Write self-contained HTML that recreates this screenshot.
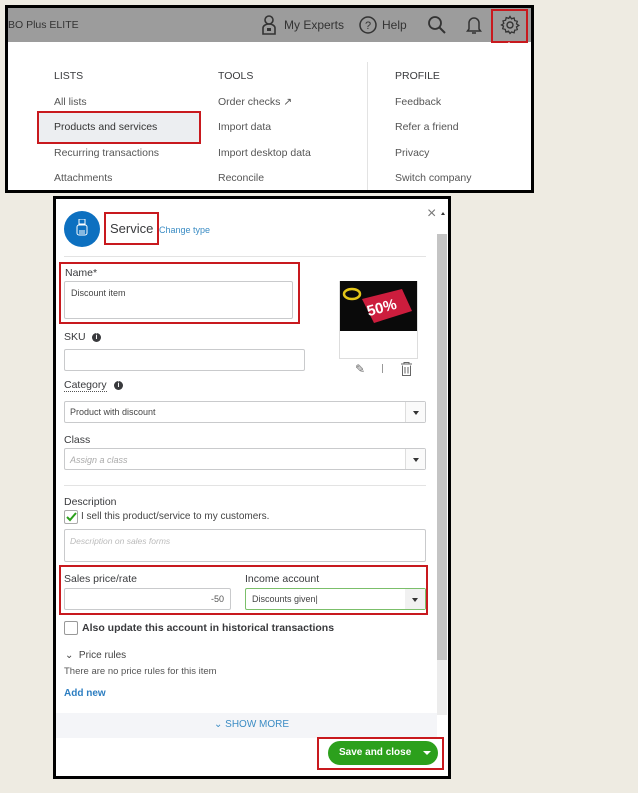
<!DOCTYPE html><html><head><style>
*{box-sizing:border-box;margin:0;padding:0}
body{width:638px;height:793px;background:#eeebe2;font-family:"Liberation Sans",sans-serif;position:relative;overflow:hidden;color:#393a3d}
.a{position:absolute}
.t{font-size:10.5px;color:#555}
.red{position:absolute;border:2px solid #c8191e}
.inp{position:absolute;border:1px solid #c9cacc;background:#fff;border-radius:2px}
.lab{position:absolute;font-size:10.5px;color:#393a3d}
.dd{position:absolute;right:0;top:0;bottom:0;width:20px;border-left:1px solid #ddd;background:#fafafa}
.dd:after{content:"";position:absolute;left:7px;top:45%;border:3px solid transparent;border-top:4px solid #333}
</style></head><body>
<!-- top box -->
<div class="a" style="left:5px;top:5px;width:529px;height:188px;border:3px solid #000;background:#fff"></div>
<div class="a" style="left:8px;top:8px;width:523px;height:34px;background:#9c9c9c"></div>
<div class="a t" style="left:8px;top:19px;color:#333">BO Plus ELITE</div>
<svg class="a" style="left:261px;top:15px" width="16" height="20" viewBox="0 0 16 20"><circle cx="8" cy="5" r="4" fill="none" stroke="#333" stroke-width="1.6"/><path d="M2 19V13a6 4 0 0 1 12 0v6z" fill="none" stroke="#333" stroke-width="1.6"/><rect x="6" y="13" width="4" height="3" fill="#333"/></svg>
<div class="a" style="left:284px;top:18px;font-size:12px;color:#333">My Experts</div>
<svg class="a" style="left:359px;top:16px" width="18" height="18"><circle cx="9" cy="9" r="8" fill="none" stroke="#333" stroke-width="1.5"/><text x="9" y="13" font-size="11" text-anchor="middle" fill="#333" font-family="Liberation Sans">?</text></svg>
<div class="a" style="left:382px;top:18px;font-size:12px;color:#333">Help</div>
<svg class="a" style="left:427px;top:15px" width="20" height="20"><circle cx="8" cy="8" r="6" fill="none" stroke="#333" stroke-width="1.8"/><path d="M12.5 12.5L18 18" stroke="#333" stroke-width="2"/></svg>
<svg class="a" style="left:465px;top:15px" width="18" height="20"><path d="M4 14V8a5 5 0 0 1 10 0v6l1.5 2h-13z" fill="none" stroke="#333" stroke-width="1.5"/><path d="M7 18h4" stroke="#333" stroke-width="1.5"/></svg>
<div class="red" style="left:491px;top:9px;width:37px;height:34px"></div>
<svg class="a" style="left:500px;top:15px" width="20" height="20" viewBox="0 0 20 20"><circle cx="10" cy="10" r="3" fill="none" stroke="#333" stroke-width="1.4"/><path d="M10 1.5l1.5 2.3 2.6-.8.6 2.6 2.6.7-.8 2.6 2.3 1.5-2.3 1.5.8 2.6-2.6.7-.6 2.6-2.6-.8L10 18.5l-1.5-2.3-2.6.8-.6-2.6-2.6-.7.8-2.6L1.5 10l2.3-1.5-.8-2.6 2.6-.7.6-2.6 2.6.8z" fill="none" stroke="#333" stroke-width="1.3"/></svg>
<div class="a" style="left:505px;top:38px;border:4px solid transparent;border-bottom:4px solid #fff"></div>
<div class="a t" style="left:54px;top:70px;color:#393a3d">LISTS</div>
<div class="a t" style="left:54px;top:96px">All lists</div>
<div class="a" style="left:38px;top:112px;width:162px;height:31px;background:#eceef1"></div>
<div class="red" style="left:37px;top:111px;width:164px;height:33px"></div>
<div class="a t" style="left:54px;top:121px;color:#333">Products and services</div>
<div class="a t" style="left:54px;top:147px">Recurring transactions</div>
<div class="a t" style="left:54px;top:172px">Attachments</div>
<div class="a t" style="left:218px;top:70px;color:#393a3d">TOOLS</div>
<div class="a t" style="left:218px;top:96px">Order checks &#x2197;</div>
<div class="a t" style="left:218px;top:121px">Import data</div>
<div class="a t" style="left:218px;top:147px">Import desktop data</div>
<div class="a t" style="left:218px;top:172px">Reconcile</div>
<div class="a" style="left:367px;top:62px;width:1px;height:128px;background:#e3e3e3"></div>
<div class="a t" style="left:395px;top:70px;color:#393a3d">PROFILE</div>
<div class="a t" style="left:395px;top:96px">Feedback</div>
<div class="a t" style="left:395px;top:121px">Refer a friend</div>
<div class="a t" style="left:395px;top:147px">Privacy</div>
<div class="a t" style="left:395px;top:172px">Switch company</div>

<!-- panel -->
<div class="a" style="left:53px;top:196px;width:398px;height:583px;border:3px solid #000;background:#fff"></div>
<div class="a" style="left:437px;top:234px;width:10px;height:426px;background:#c4c4c4"></div>
<div class="a" style="left:437px;top:660px;width:10px;height:55px;background:#ececec"></div>
<div class="a" style="left:427px;top:205px;font-size:16px;color:#777">×</div>
<div class="a" style="left:441px;top:210px;border:2px solid transparent;border-bottom:3px solid #333"></div>
<div class="a" style="left:64px;top:211px;width:36px;height:36px;border-radius:50%;background:#0d70c0"></div>
<svg class="a" style="left:75px;top:219px" width="14" height="20"><rect x="4" y="0" width="6" height="5" fill="none" stroke="#fff"/><rect x="2" y="6" width="10" height="10" rx="2" fill="none" stroke="#fff"/><path d="M4 12h6M4 14h6" stroke="#fff"/></svg>
<div class="red" style="left:104px;top:212px;width:55px;height:33px"></div>
<div class="a" style="left:110px;top:221px;font-size:13px;color:#393a3d">Service</div>
<div class="a" style="left:159px;top:225px;font-size:9px;color:#3b8cc4">Change type</div>
<div class="a" style="left:64px;top:256px;width:362px;height:1px;background:#e3e3e3"></div>
<div class="red" style="left:59px;top:262px;width:241px;height:62px"></div>
<div class="lab" style="left:65px;top:267px">Name*</div>
<div class="inp" style="left:64px;top:281px;width:229px;height:38px"></div>
<div class="a" style="left:71px;top:288px;font-size:9px;color:#444">Discount item</div>
<div class="a" style="left:339px;top:281px;width:79px;height:78px;border:1px solid #ddd;background:#fff"></div>
<svg class="a" style="left:340px;top:281px" width="77" height="50"><rect width="77" height="50" fill="#0a0a0a"/><ellipse cx="12" cy="13" rx="8" ry="5" fill="none" stroke="#e4c619" stroke-width="2.5"/><path d="M22 18l40-10 10 22-38 12z" fill="#cc1d3d"/><text x="27" y="32" font-size="15" font-weight="bold" fill="#fff" transform="rotate(-15 40 28)" font-family="Liberation Sans">50%</text></svg>
<div class="a" style="left:355px;top:362px;font-size:12px;color:#666">✎</div>
<div class="a" style="left:382px;top:364px;width:1px;height:9px;background:#999"></div>
<svg class="a" style="left:400px;top:362px" width="13" height="14"><path d="M1 2h11M4 2V0.5h5V2M2.5 3.5v10h8v-10M5 5v6.5M8 5v6.5" fill="none" stroke="#666"/></svg>
<div class="lab" style="left:64px;top:331px">SKU</div>
<div class="a" style="left:92px;top:333px;width:9px;height:9px;border-radius:50%;background:#393a3d;color:#fff;font-size:7px;text-align:center;line-height:9px;font-weight:bold">i</div>
<div class="inp" style="left:64px;top:349px;width:241px;height:22px"></div>
<div class="lab" style="left:64px;top:379px;border-bottom:1px dotted #555">Category</div>
<div class="a" style="left:114px;top:381px;width:9px;height:9px;border-radius:50%;background:#393a3d;color:#fff;font-size:7px;text-align:center;line-height:9px;font-weight:bold">i</div>
<div class="inp" style="left:64px;top:401px;width:362px;height:22px"><div class="dd"></div></div>
<div class="a" style="left:70px;top:407px;font-size:9px;color:#444">Product with discount</div>
<div class="lab" style="left:64px;top:434px">Class</div>
<div class="inp" style="left:64px;top:448px;width:362px;height:22px"><div class="dd"></div></div>
<div class="a" style="left:70px;top:455px;font-size:9px;color:#aaa;font-style:italic">Assign a class</div>
<div class="a" style="left:64px;top:485px;width:362px;height:1px;background:#e3e3e3"></div>
<div class="lab" style="left:64px;top:496px">Description</div>
<div class="a" style="left:64px;top:510px;width:14px;height:14px;border:1px solid #aaa;border-radius:2px"></div>
<svg class="a" style="left:65px;top:511px" width="12" height="12"><path d="M2 6l3 3 6-7" fill="none" stroke="#2ca01c" stroke-width="2"/></svg>
<div class="a" style="left:81px;top:511px;font-size:10px;color:#444">I sell this product/service to my customers.</div>
<div class="inp" style="left:64px;top:529px;width:362px;height:33px"></div>
<div class="a" style="left:70px;top:536px;font-size:8.5px;color:#bbb;font-style:italic">Description on sales forms</div>
<div class="red" style="left:59px;top:565px;width:369px;height:50px"></div>
<div class="lab" style="left:64px;top:573px">Sales price/rate</div>
<div class="inp" style="left:64px;top:588px;width:167px;height:22px"></div>
<div class="a" style="left:211px;top:594px;font-size:9px;color:#555">-50</div>
<div class="lab" style="left:245px;top:573px">Income account</div>
<div class="inp" style="left:245px;top:588px;width:181px;height:22px;border-color:#7bbf6a"><div class="dd" style="border-left:none;background:#f1f1f1"></div></div>
<div class="a" style="left:252px;top:594px;font-size:9px;color:#444">Discounts given|</div>
<div class="a" style="left:64px;top:621px;width:14px;height:14px;border:1px solid #999;border-radius:2px"></div>
<div class="a" style="left:82px;top:622px;font-size:10.5px;font-weight:bold;color:#393a3d">Also update this account in historical transactions</div>
<div class="a" style="left:65px;top:650px;font-size:10px;color:#444">&#x2304;&nbsp; Price rules</div>
<div class="a" style="left:64px;top:666px;font-size:9.5px;color:#555">There are no price rules for this item</div>
<div class="a" style="left:64px;top:688px;font-size:10px;color:#2d7ec1;font-weight:bold">Add new</div>
<div class="a" style="left:56px;top:713px;width:381px;height:25px;background:#f4f5f8"></div>
<div class="a" style="left:214px;top:719px;font-size:10px;color:#3b8cc4">&#x2304; SHOW MORE</div>
<div class="red" style="left:317px;top:737px;width:127px;height:33px"></div>
<div class="a" style="left:328px;top:741px;width:110px;height:24px;border-radius:12px;background:#2ca01c"></div>
<div class="a" style="left:339px;top:747px;font-size:10px;font-weight:bold;color:#fff">Save and close</div>
<div class="a" style="left:423px;top:751px;border:4px solid transparent;border-top:4px solid #fff"></div>
</body></html>
